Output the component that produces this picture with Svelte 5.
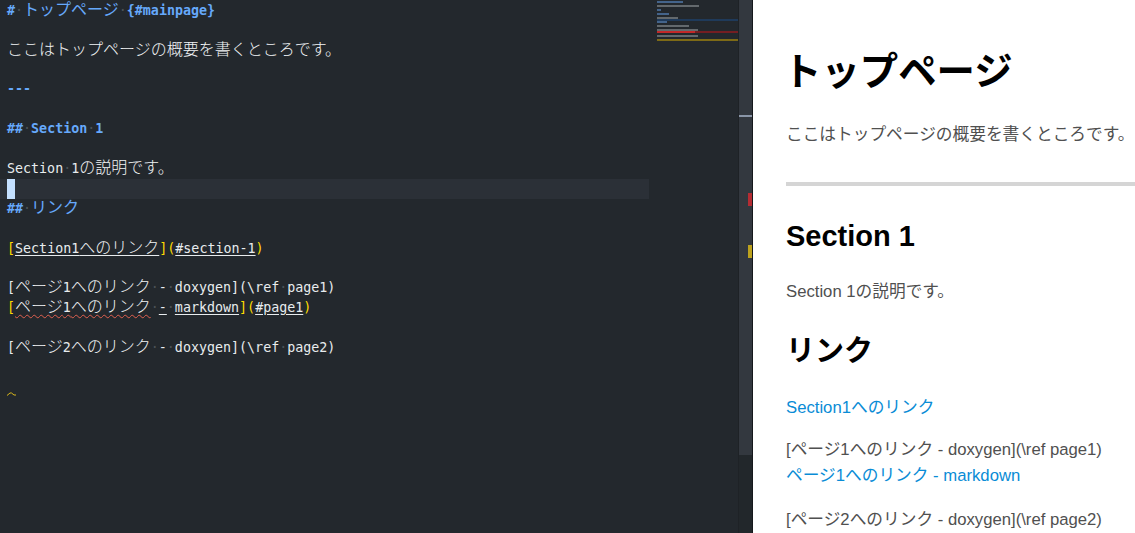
<script>
	const gray = '#6f7479';
	const blue = '#4a6f9c';
	// one entry per source line, the minimap draws each line 2px high
	const mini = [
		{ w: 26, c: blue },
		{},
		{ w: 42, c: gray },
		{},
		{ w: 4, c: blue },
		{},
		{ w: 12, c: blue },
		{},
		{ w: 21, c: gray },
		{ bar: '#1f3a5a' },
		{ w: 10, c: blue },
		{},
		{ w: 32, c: gray },
		{},
		{ w: 41, c: gray },
		{ w: 38, c: '#d02a2a', bar: '#741e22' },
		{},
		{ w: 41, c: gray },
		{},
		{ bar: '#7d6a16' }
	];
</script>

<div class="page">
	<section class="editor">
		<div class="code">
			<div class="line head"><b>#</b><i>·</i><span class="j">トップページ</span><i>·</i><b>&#123;#mainpage&#125;</b></div>
			<div class="line"></div>
			<div class="line"><span class="j">ここはトップページの概要を書くところです。</span></div>
			<div class="line"></div>
			<div class="line head"><b>---</b></div>
			<div class="line"></div>
			<div class="line head"><b>##</b><i>·</i><b>Section</b><i>·</i><b>1</b></div>
			<div class="line"></div>
			<div class="line">Section<i>·</i>1<span class="j">の説明です。</span></div>
			<div class="line current"><span class="cursor"></span></div>
			<div class="line head"><b>##</b><i>·</i><span class="j">リンク</span></div>
			<div class="line"></div>
			<div class="line"><em>[</em><u>Section1<span class="j">へのリンク</span></u><em>]</em><em>(</em><u>#section-1</u><em>)</em></div>
			<div class="line"></div>
			<div class="line">[<span class="j">ページ</span>1<span class="j">へのリンク</span><i>·</i>-<i>·</i>doxygen](\ref<i>·</i>page1)</div>
			<div class="line"><em>[</em><span class="err"><span class="j">ページ</span>1<span class="j">へのリンク</span></span><i>·</i><u>-</u><i>·</i><u>markdown</u><em>]</em><em>(</em><u>#page1</u><em>)</em></div>
			<div class="line"></div>
			<div class="line">[<span class="j">ページ</span>2<span class="j">へのリンク</span><i>·</i>-<i>·</i>doxygen](\ref<i>·</i>page2)</div>
			<div class="line"></div>
			<div class="line">
				<svg class="warn" width="9" height="4" viewBox="0 0 9 4" aria-hidden="true">
					<path d="M0 3.5 L3 1 L4.5 1 L7 3 L9 3" fill="none" stroke="#d8b61c" stroke-width="1" />
				</svg>
			</div>
		</div>
		<div class="minimap">
			{#each mini as row}
				<div class="mrow" style="background: {row.bar ?? 'transparent'}">
					{#if row.w}
						<span style="width: {row.w}px; background: {row.c}"></span>
					{/if}
				</div>
			{/each}
		</div>
		<div class="scrollbar">
			<div class="thumb"></div>
			<span class="mark pos"></span>
			<span class="mark red"></span>
			<span class="mark yellow"></span>
		</div>
	</section>
	<article class="preview">
		<h1>トップページ</h1>
		<p>ここはトップページの概要を書くところです。</p>
		<hr />
		<h2>Section 1</h2>
		<p>Section 1の説明です。</p>
		<h2 class="links">リンク</h2>
		<p><a href="#section-1">Section1へのリンク</a></p>
		<p>[ページ1へのリンク - doxygen](\ref page1)<br /><a href="#page1">ページ1へのリンク - markdown</a></p>
		<p class="last">[ページ2へのリンク - doxygen](\ref page2)</p>
	</article>
</div>

<style>
	:global(body) {
		margin: 0;
		background: #fff;
	}
	.page {
		display: flex;
		width: 1135px;
		height: 533px;
		overflow: hidden;
	}
	.editor {
		display: flex;
		width: 752px;
		flex: none;
		background: #23282d;
		border-right: 1px solid #15181c;
	}
	.code {
		width: 649px;
		flex: none;
		padding-left: 7px;
		box-sizing: border-box;
		font: 13.33px/19.8px 'DejaVu Sans Mono', monospace;
		color: #e8ecee;
	}
	.line {
		height: 19.8px;
		white-space: pre;
	}
	.j {
		font-family: 'Noto Sans CJK JP', sans-serif;
		font-size: 16px;
		font-weight: 300;
		line-height: 1;
		color: #f2f4f6;
	}
	.head {
		color: #66a9fb;
		font-weight: bold;
	}
	.head .j {
		font-weight: 400;
		color: #66a9fb;
	}
	i {
		font-style: normal;
		font-weight: normal;
		color: #4b5257;
	}
	em {
		font-style: normal;
		color: #ffdc00;
	}
	u {
		text-decoration: underline;
		text-underline-offset: 2px;
	}
	.err {
		text-decoration: underline wavy #e0604f 1px;
		text-underline-offset: 2px;
	}
	.current {
		margin: 0.6px 0 -0.6px -7px;
		background: #2b3037;
	}
	.cursor {
		display: block;
		width: 8px;
		height: 19.8px;
		margin-left: 7px;
		background: #c4e0ff;
	}
	.warn {
		display: block;
		padding-top: 16px;
	}
	.minimap {
		width: 89px;
		flex: none;
		padding: 1px 0 0 8px;
		box-sizing: border-box;
	}
	.mrow {
		height: 2px;
		display: flex;
	}
	.mrow span {
		display: block;
		height: 2px;
		opacity: 0.85;
	}
	.scrollbar {
		position: relative;
		flex: 1;
		background: #22272b;
		border-left: 1px solid #1e2226;
	}
	.thumb {
		height: 455px;
		background: #33383f;
	}
	.mark {
		position: absolute;
		right: 0;
	}
	.pos {
		left: 0;
		top: 115px;
		height: 2px;
		background: #8a96a8;
	}
	.red {
		top: 193px;
		width: 4px;
		height: 13px;
		background: #b52c33;
	}
	.yellow {
		top: 245px;
		width: 4px;
		height: 13px;
		background: #bda21e;
	}
	.preview {
		flex: none;
		width: 382px;
		padding-left: 33px;
		box-sizing: border-box;
		font: 16.7px/26px 'Liberation Sans', 'Noto Sans CJK JP', sans-serif;
		color: #505050;
	}
	h1 {
		margin: 46px 0 24px -3px;
		font-size: 38.4px;
		line-height: 52px;
		color: #000;
	}
	h2 {
		margin: 27px 0 24px;
		font-size: 29px;
		line-height: 38px;
		color: #000;
	}
	h2.links {
		margin-bottom: 25px;
	}
	p {
		margin: 0 0 16px;
		white-space: nowrap;
	}
	p.last {
		margin-top: 18px;
	}
	hr {
		height: 4px;
		border: 0;
		margin: 34px 0 31px;
		background: #d5d5d5;
	}
	a {
		color: #0a8cd6;
		text-decoration: none;
	}
</style>
